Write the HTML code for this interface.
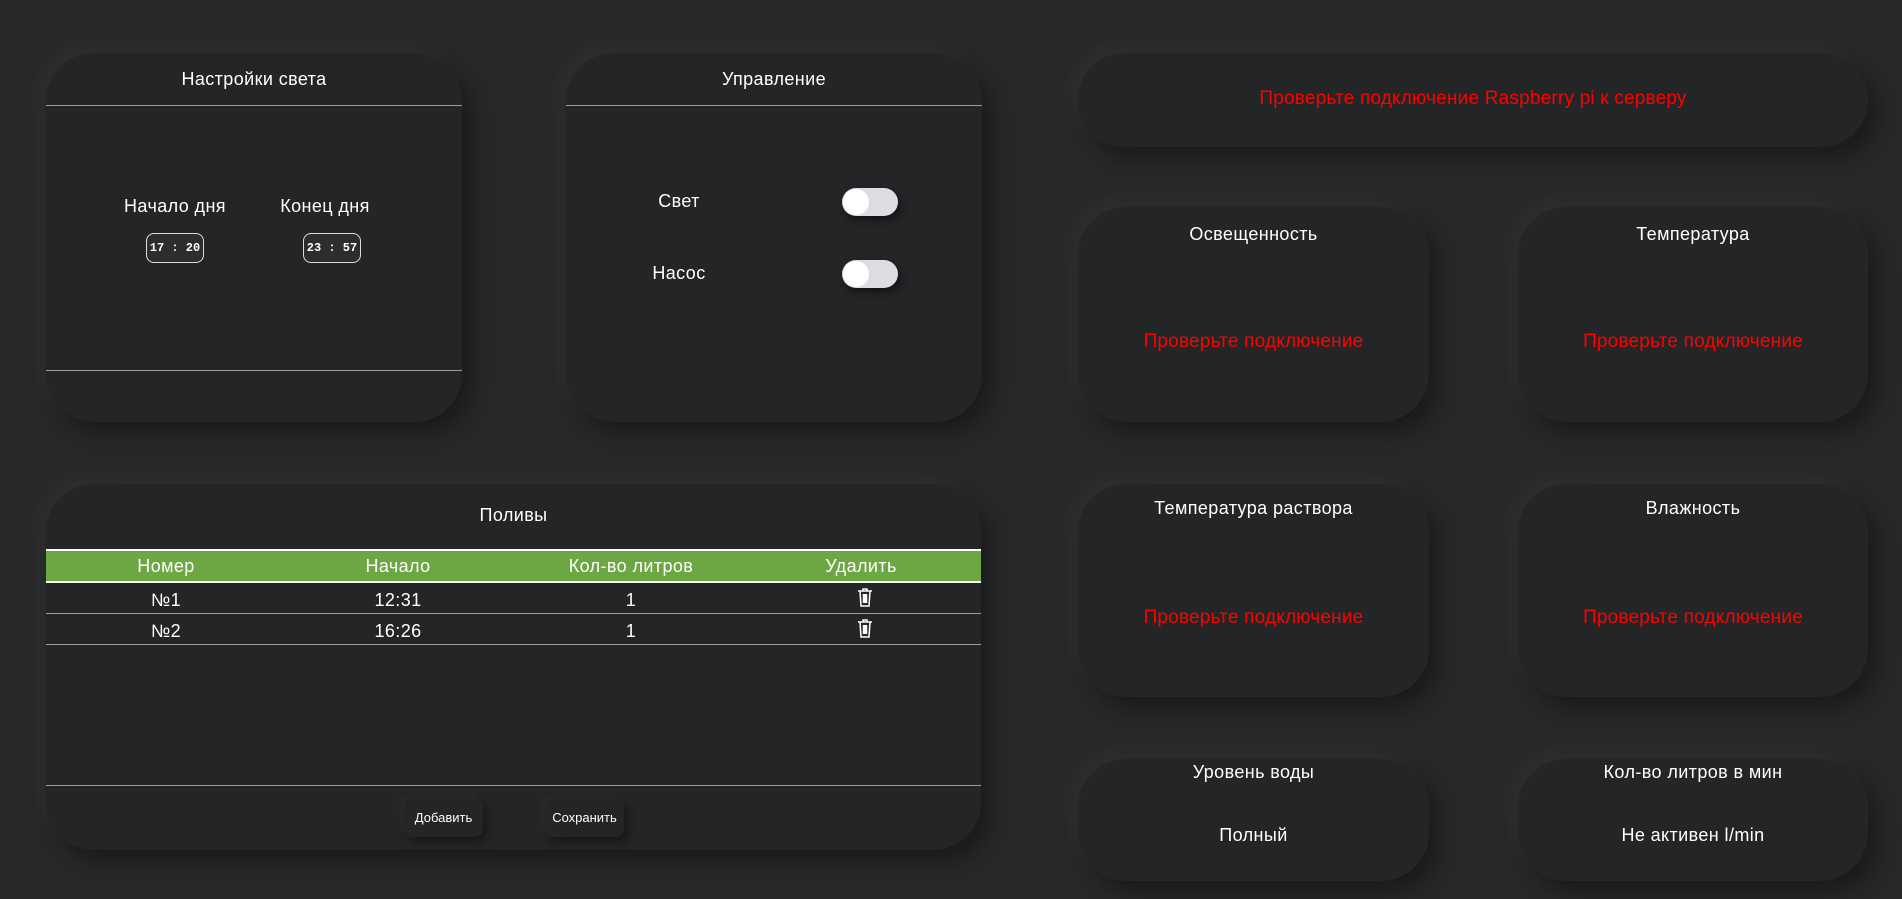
<!DOCTYPE html>
<html><head><meta charset="utf-8"><style>
*{box-sizing:border-box;margin:0;padding:0}
body{width:1902px;height:899px;background:#27282a;font-family:"Liberation Sans","DejaVu Sans",sans-serif;color:#fff;position:relative;overflow:hidden}
.c{position:absolute;background:#242527;border-radius:48px;box-shadow:10px 12px 22px rgba(0,0,0,.35),-8px -8px 18px rgba(255,255,255,.035)}
.t{position:absolute;left:0;right:0;text-align:center;font-size:18px;letter-spacing:.4px}
.ln{position:absolute;left:0;right:0;height:1px;background:#9a9a9a}
.red{color:#f00;font-size:19px;letter-spacing:.2px}
.tm{position:absolute;width:58px;height:30px;border:1px solid #ddd;border-radius:8px;background:#2e2d2b;font-family:"Liberation Mono",monospace;font-size:12px;font-weight:bold;text-align:center;line-height:28px}
.tg{position:absolute;width:56px;height:28px;border-radius:14px;background:#dcdde2;box-shadow:3px 4px 8px rgba(0,0,0,.5)}
.tg::after{content:"";position:absolute;left:1px;top:1px;width:26px;height:26px;border-radius:50%;background:#fff}
.btn{position:absolute;background:#242527;border-radius:8px;font-size:13px;text-align:center;box-shadow:4px 5px 10px rgba(0,0,0,.4),-3px -3px 8px rgba(255,255,255,.04)}
.col{position:absolute;width:220px;margin-left:-110px;text-align:center;font-size:18px;letter-spacing:.4px}
</style></head><body>
<div class="c" style="left:46px;top:53px;width:416px;height:369px">
 <div class="t" style="top:16px">Настройки света</div>
 <div class="ln" style="top:52px"></div>
 <div class="col" style="left:129px;top:143px">Начало дня</div>
 <div class="col" style="left:279px;top:143px">Конец дня</div>
 <div class="tm" style="left:100px;top:180px">17 : 20</div>
 <div class="tm" style="left:257px;top:180px">23 : 57</div>
 <div class="ln" style="top:317px"></div>
</div>
<div class="c" style="left:566px;top:53px;width:416px;height:369px">
 <div class="t" style="top:16px">Управление</div>
 <div class="ln" style="top:52px"></div>
 <div class="col" style="left:113px;top:138px">Свет</div>
 <div class="col" style="left:113px;top:210px">Насос</div>
 <div class="tg" style="left:276px;top:135px"></div>
 <div class="tg" style="left:276px;top:207px"></div>
</div>
<div class="c" style="left:46px;top:484px;width:935px;height:366px">
 <div class="t" style="top:21px">Поливы</div>
 <div style="position:absolute;left:0;right:0;top:65px;height:34px;background:#6ca744;border-top:2px solid #fff;border-bottom:2px solid #fff"></div>
 <div class="col" style="left:120px;top:72px">Номер</div>
 <div class="col" style="left:352px;top:72px">Начало</div>
 <div class="col" style="left:585px;top:72px">Кол-во литров</div>
 <div class="col" style="left:815px;top:72px">Удалить</div>
 <div class="col" style="left:120px;top:106px">№1</div>
 <div class="col" style="left:352px;top:106px">12:31</div>
 <div class="col" style="left:585px;top:106px">1</div>
 <div class="ln" style="top:129px"></div>
 <div class="col" style="left:120px;top:137px">№2</div>
 <div class="col" style="left:352px;top:137px">16:26</div>
 <div class="col" style="left:585px;top:137px">1</div>
 <div class="ln" style="top:160px"></div>
 <svg style="position:absolute;left:810px;top:103px" width="18" height="20" viewBox="0 0 16 20" fill="none" stroke="#fff" stroke-width="1.5"><path d="M1 4h14M6 4V2h4v2M3 4l1 15h8l1-15M6.5 7v9M8 7v9M9.5 7v9"/></svg>
 <svg style="position:absolute;left:810px;top:134px" width="18" height="20" viewBox="0 0 16 20" fill="none" stroke="#fff" stroke-width="1.5"><path d="M1 4h14M6 4V2h4v2M3 4l1 15h8l1-15M6.5 7v9M8 7v9M9.5 7v9"/></svg>
 <div class="ln" style="top:301px"></div>
 <div class="btn" style="left:358px;top:315px;width:79px;height:38px;line-height:38px">Добавить</div>
 <div class="btn" style="left:499px;top:315px;width:79px;height:38px;line-height:38px">Сохранить</div>
</div>
<div class="c" style="left:1078px;top:53px;width:790px;height:94px">
 <div class="t red" style="top:35px">Проверьте подключение Raspberry pi к серверу</div>
</div>
<div class="c" style="left:1078px;top:207px;width:351px;height:215px"><div class="t" style="top:17px">Освещенность</div><div class="t red" style="top:124px">Проверьте подключение</div></div>
<div class="c" style="left:1518px;top:207px;width:350px;height:215px"><div class="t" style="top:17px">Температура</div><div class="t red" style="top:124px">Проверьте подключение</div></div>
<div class="c" style="left:1078px;top:484px;width:351px;height:213px"><div class="t" style="top:14px">Температура раствора</div><div class="t red" style="top:123px">Проверьте подключение</div></div>
<div class="c" style="left:1518px;top:484px;width:350px;height:213px"><div class="t" style="top:14px">Влажность</div><div class="t red" style="top:123px">Проверьте подключение</div></div>
<div class="c" style="left:1078px;top:759px;width:351px;height:122px"><div class="t" style="top:3px">Уровень воды</div><div class="t" style="top:66px">Полный</div></div>
<div class="c" style="left:1518px;top:759px;width:350px;height:122px"><div class="t" style="top:3px">Кол-во литров в мин</div><div class="t" style="top:66px">Не активен l/min</div></div>
</body></html>
